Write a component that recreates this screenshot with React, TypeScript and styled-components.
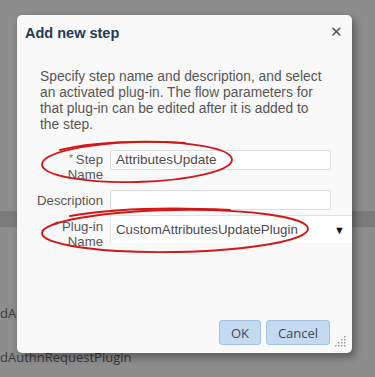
import React from 'react'
import styled, { createGlobalStyle } from 'styled-components'

const GlobalStyle = createGlobalStyle`
  html, body {
    margin: 0;
    padding: 0;
    background: #8d8d8d;
  }
  #root {
    width: 375px;
    height: 377px;
    overflow: hidden;
  }
`

const Page = styled.div`
  position: relative;
  width: 375px;
  height: 377px;
  background: #8d8d8d;
  font-family: 'Liberation Sans', Arial, sans-serif;
`

// page behind the popup
const Backdrop = styled.div`
  display: flex;
  flex-direction: column;
  padding-top: 211px;
`

const Band = styled.div`
  height: 16px;
  background: #7b7b7b;
`

const BackRow = styled.div<{ $top: number }>`
  margin-top: ${(p) => p.$top}px;
  font-family: 'Open Sans', sans-serif;
  font-size: 13px;
  line-height: 16px;
  color: #3a3a3a;
  white-space: nowrap;
`

const Dialog = styled.div`
  position: absolute;
  left: 17px;
  top: 15px;
  width: 335px;
  height: 338px;
  box-sizing: border-box;
  display: flex;
  flex-direction: column;
  background: #f9f9f9;
  border-radius: 5px;
  box-shadow: 3px 4px 9px rgba(0, 0, 0, 0.38);
`

const Header = styled.div`
  height: 36px;
  display: flex;
  align-items: center;
  justify-content: space-between;
  padding: 0 9px 0 8px;
`

const Title = styled.div`
  font-size: 14.5px;
  font-weight: bold;
  color: #1f3d55;
`

const Close = styled.div`
  font-size: 15px;
  color: #555;
  line-height: 1;
  margin-top: -4px;
`

const Intro = styled.p`
  margin: 18px 0 0 23px;
  width: 300px;
  font-size: 13.8px;
  line-height: 16px;
  color: #565656;
`

const Form = styled.div`
  margin-top: 17px;
  display: flex;
  flex-direction: column;
`

const Row = styled.div<{ $gap: number }>`
  display: flex;
  align-items: flex-start;
  margin-top: ${(p) => p.$gap}px;
`

const Label = styled.div<{ $pad: number }>`
  width: 74px;
  margin-left: 12px;
  padding-top: ${(p) => p.$pad}px;
  margin-right: 7px;
  display: flex;
  flex-direction: column;
  align-items: flex-end;
  font-size: 13.2px;
  line-height: 15px;
  color: #565656;
  white-space: nowrap;
`

const Star = styled.span`
  font-size: 10px;
  color: #777;
  margin-right: 3px;
  vertical-align: 2px;
`

const Input = styled.div`
  width: 221px;
  height: 20px;
  box-sizing: border-box;
  padding: 0 5px;
  background: #fff;
  border: 1px solid #dcdcdc;
  border-radius: 2px;
  font-size: 13.5px;
  line-height: 18px;
  color: #4a4a4a;
`

const Select = styled.div`
  width: 242px;
  height: 28px;
  box-sizing: border-box;
  display: flex;
  align-items: center;
  justify-content: space-between;
  padding: 0 7px 0 5px;
  background: #fff;
  border-top: 1px solid #e2e2e2;
  border-left: 1px solid #e6e6e6;
  font-size: 13.3px;
  color: #4a4a4a;
`

const Arrow = styled.span`
  font-size: 11px;
  color: #111;
`

const Footer = styled.div`
  margin-top: auto;
  display: flex;
  justify-content: flex-end;
  gap: 5px;
  padding: 0 22px 8px 0;
`

const Button = styled.div<{ $w: number }>`
  width: ${(p) => p.$w}px;
  height: 25px;
  box-sizing: border-box;
  display: flex;
  align-items: center;
  justify-content: center;
  background: #c4daf1;
  border: 1px solid #a4c0e2;
  border-radius: 3px;
  font-family: 'Open Sans', sans-serif;
  font-size: 13px;
  color: #3c4a58;
`

const Grip = styled.svg`
  position: absolute;
  right: 5px;
  bottom: 6px;
`

const Marks = styled.svg`
  position: absolute;
  left: 0;
  top: 0;
  pointer-events: none;
`

const gripDots = [
  [9, 1],
  [6, 4], [9, 4],
  [3, 7], [6, 7], [9, 7],
  [0, 10], [3, 10], [6, 10], [9, 10],
]

export default function App() {
  return (
    <Page>
      <GlobalStyle />
      <Backdrop>
        <Band />
        <BackRow $top={78}>dAuthnRequestPlugin</BackRow>
        <BackRow $top={28}>dAuthnRequestPlugin</BackRow>
      </Backdrop>

      <Dialog>
        <Header>
          <Title>Add new step</Title>
          <Close>✕</Close>
        </Header>
        <Intro>
          Specify step name and description, and select
          <br />
          an activated plug-in. The flow parameters for
          <br />
          that plug-in can be edited after it is added to
          <br />
          the step.
        </Intro>
        <Form>
          <Row $gap={0}>
            <Label $pad={1}>
              <span>
                <Star>*</Star>Step
              </span>
              <span>Name</span>
            </Label>
            <Input>AttributesUpdate</Input>
          </Row>
          <Row $gap={8}>
            <Label $pad={3}>Description</Label>
            <Input />
          </Row>
          <Row $gap={5}>
            <Label $pad={3}>
              <span>
                <Star>*</Star>Plug-in
              </span>
              <span>Name</span>
            </Label>
            <Select>
              <span>CustomAttributesUpdatePlugin</span>
              <Arrow>▼</Arrow>
            </Select>
          </Row>
        </Form>
        <Footer>
          <Button $w={42}>OK</Button>
          <Button $w={64}>Cancel</Button>
        </Footer>
        <Grip width="12" height="12" viewBox="0 0 12 12">
          {gripDots.map(([x, y]) => (
            <rect key={`${x}-${y}`} x={x} y={y} width="1.5" height="1.5" fill="#9a9a9a" />
          ))}
        </Grip>
      </Dialog>

      <Marks width="375" height="377" viewBox="0 0 375 377">
        <g fill="none" stroke="#d01818" strokeWidth="1.9" strokeLinecap="round">
          <ellipse cx="137" cy="162" rx="95" ry="20" transform="rotate(-1.5 137 162)" />
          <path d="M60 150 C90 142 140 140 185 143" />
          <ellipse cx="175" cy="231" rx="133" ry="21" transform="rotate(-1 175 231)" />
          <path d="M70 216 C110 209 170 207 230 210" />
        </g>
      </Marks>
    </Page>
  )
}
